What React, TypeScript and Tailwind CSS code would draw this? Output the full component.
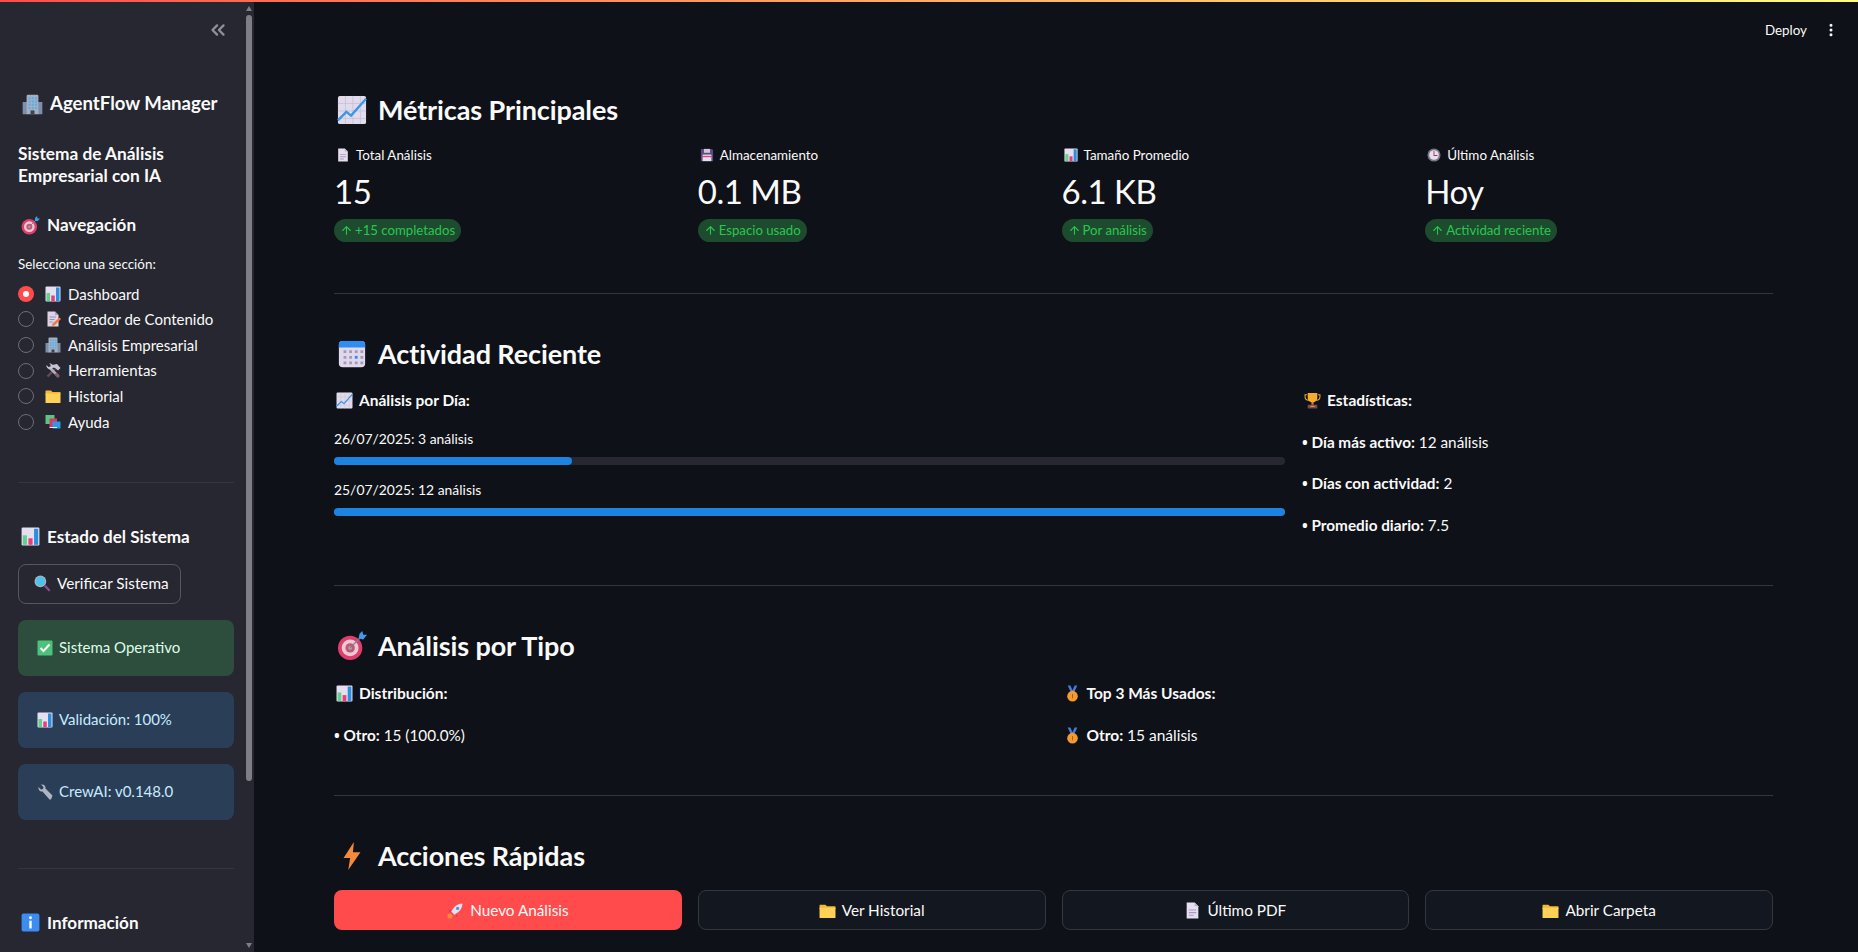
import React from "react";
import { ChevronsLeft, ArrowUp, EllipsisVertical } from "lucide-react";

type IconProps = { className?: string };

const Building = ({ className }: IconProps) => (
  <svg viewBox="0 0 32 32" className={className}>
    <path d="M1 12h7v19H1zM24 12h7v19h-7z" fill="#7d8ea6" />
    <path d="M7 3q0-2 2-2h14q2 0 2 2v28H7z" fill="#a3afc2" />
    <path d="M10 5h3v3h-3zM15 5h3v3h-3zM20 5h3v3h-3zM10 10h3v3h-3zM15 10h3v3h-3zM20 10h3v3h-3zM10 15h3v3h-3zM15 15h3v3h-3zM20 15h3v3h-3zM10 20h3v3h-3zM15 20h3v3h-3zM20 20h3v3h-3z" fill="#4fb0ee" />
    <path d="M13 25h6v6h-6z" fill="#3f4450" />
  </svg>
);

const BarChart = ({ className }: IconProps) => (
  <svg viewBox="0 0 32 32" className={className}>
    <rect x="1" y="1" width="30" height="30" rx="2" fill="#e6dff0" />
    <path d="M3 14h7v16H3z" fill="#5fd38d" />
    <path d="M12.5 19h7v11h-7z" fill="#ea3c78" />
    <path d="M22 3h7v27h-7z" fill="#2a8fe0" />
  </svg>
);

const Memo = ({ className }: IconProps) => (
  <svg viewBox="0 0 32 32" className={className}>
    <path d="M5 1h15l7 7v23H5z" fill="#dcd3e8" />
    <path d="M20 1l7 7h-7z" fill="#a99bbd" />
    <path d="M9 11h13v2H9zM9 16h10v2H9zM9 21h6v2H9z" fill="#9d8fb0" />
    <path d="M29 13l3 3-13 13-5 1 1-5z" fill="#f5793b" />
  </svg>
);

const Tools = ({ className }: IconProps) => (
  <svg viewBox="0 0 32 32" className={className}>
    <path d="M5 27L20 12" stroke="#6a4a5a" strokeWidth="4.5" />
    <path d="M14 4l10-2 7 8-5 5-6-5-5-1z" fill="#c9c2d3" />
    <path d="M9 9l18 18" stroke="#b5aec2" strokeWidth="5" />
    <path d="M21 21l7 7" stroke="#8a5a6a" strokeWidth="5" />
    <path d="M13 12C8 14 2 10 3 4l4 4 4-1 0-4-3-2c6-1 10 4 8 9z" fill="#c9c2d3" />
  </svg>
);

const Folder = ({ className }: IconProps) => (
  <svg viewBox="0 0 32 32" className={className}>
    <path d="M1 6q0-1 1-1h10l3 3h15q1 0 1 1v4H1z" fill="#f5b73a" />
    <path d="M1 11h30v18q0 1-1 1H2q-1 0-1-1z" fill="#ffd257" />
  </svg>
);

const Books = ({ className }: IconProps) => (
  <svg viewBox="0 0 32 32" className={className}>
    <path d="M1 2h18v18H1z" fill="#5fc47d" />
    <path d="M9 9h15v18H9z" fill="#d9386e" />
    <path d="M15 15h16v14H15z" fill="#2a9be0" />
    <path d="M9 26h15v2H9z" fill="#f0e9f5" />
  </svg>
);

const Magnifier = ({ className }: IconProps) => (
  <svg viewBox="0 0 32 32" className={className}>
    <path d="M19 22l3-3 9 9-3 3z" fill="#8a4f92" />
    <circle cx="12" cy="12" r="11" fill="#b7b0c4" />
    <circle cx="12" cy="12" r="9" fill="#4cc4ea" />
  </svg>
);

const CheckBox = ({ className }: IconProps) => (
  <svg viewBox="0 0 32 32" className={className}>
    <rect x="1" y="1" width="30" height="30" rx="2" fill="#4cc27a" />
    <path d="M7 16l6 6 12-13" fill="none" stroke="#fff" strokeWidth="4" />
  </svg>
);

const Wrench = ({ className }: IconProps) => (
  <svg viewBox="0 0 32 32" className={className}>
    <path d="M28 31l-3 0L11 15c-5 1-9-3-8-9l5 5 4-1 1-4-5-5c6-1 10 3 9 8l14 14z" fill="#aeb4c2" />
  </svg>
);

const Info = ({ className }: IconProps) => (
  <svg viewBox="0 0 32 32" className={className}>
    <rect x="1" y="1" width="30" height="30" rx="3" fill="#3d8df0" />
    <path d="M14 13h4v13h-4z" fill="#fff" />
    <circle cx="16" cy="8" r="2.5" fill="#fff" />
  </svg>
);

const ChartUp = ({ className }: IconProps) => (
  <svg viewBox="0 0 32 32" className={className}>
    <rect x="1" y="1" width="30" height="30" rx="2" fill="#e2dbec" />
    <path d="M1 9h30M1 17h30M1 25h30M9 1v30M17 1v30M25 1v30" stroke="#cbc2d8" strokeWidth="1" />
    <path d="M1 27l9-9 5 4L31 4" fill="none" stroke="#3a97e4" strokeWidth="2.5" />
  </svg>
);

const Page = ({ className }: IconProps) => (
  <svg viewBox="0 0 32 32" className={className}>
    <path d="M5 1h15l7 7v23H5z" fill="#e6dff0" />
    <path d="M20 1l7 7h-7z" fill="#bcb0cc" />
    <path d="M9 14h14v2H9zM9 19h14v2H9zM9 24h9v2H9z" fill="#a99bbd" />
  </svg>
);

const Floppy = ({ className }: IconProps) => (
  <svg viewBox="0 0 32 32" className={className}>
    <path d="M2 2h25l3 3v25H2z" fill="#5a4a80" />
    <path d="M9 2h14v9H9z" fill="#cfc6dc" />
    <path d="M6 15h20v15H6z" fill="#e6dff0" />
    <path d="M6 18h20v3H6z" fill="#e2406f" />
  </svg>
);

const Clock = ({ className }: IconProps) => (
  <svg viewBox="0 0 32 32" className={className}>
    <circle cx="16" cy="16" r="15" fill="#7a7583" />
    <circle cx="16" cy="16" r="11" fill="#e6e0ee" />
    <path d="M15 7h2v9h7v2h-9z" fill="#b02c5a" />
  </svg>
);

const Calendar = ({ className }: IconProps) => (
  <svg viewBox="0 0 32 32" className={className}>
    <rect x="2" y="2" width="28" height="28" rx="4" fill="#e0d8ec" />
    <path d="M2 9V6q0-4 4-4h20q4 0 4 4v3z" fill="#2f8cf2" />
    <path d="M7 12h3v3H7zM13 12h3v3h-3zM19 12h3v3h-3zM7 18h3v3H7zM13 18h3v3h-3zM25 18h3v3h-3zM7 24h3v3H7zM13 24h3v3h-3zM19 24h3v3h-3zM25 12h3v3h-3zM25 24h3v3h-3z" fill="#a49ab6" />
    <path d="M19 18h3v3h-3z" fill="#2f8cf2" />
  </svg>
);

const Target = ({ className }: IconProps) => (
  <svg viewBox="0 0 32 32" className={className}>
    <circle cx="14" cy="18" r="13" fill="#df3e6c" />
    <circle cx="14" cy="18" r="9" fill="#eac8d6" />
    <circle cx="14" cy="18" r="5" fill="#c5566f" />
    <circle cx="14" cy="18" r="2" fill="#a7a1b2" />
    <path d="M14 18L26 6" stroke="#7a7f96" strokeWidth="1.5" />
    <path d="M24 3l3-3 1 4 4 0-4 5-5-1z" fill="#3d9be9" />
  </svg>
);

const Trophy = ({ className }: IconProps) => (
  <svg viewBox="0 0 32 32" className={className}>
    <path d="M6 5H2v4q0 6 7 7M26 5h4v4q0 6-7 7" fill="none" stroke="#e4a52f" strokeWidth="2" />
    <path d="M7 2h18v9q0 8-9 9-9-1-9-9z" fill="#f6ab2d" />
    <path d="M14 19h4v5h-4z" fill="#d08b22" />
    <path d="M7 24h18v7H7z" fill="#7b4a55" />
    <path d="M12 26h8v2h-8z" fill="#e4a52f" />
  </svg>
);

const Medal = ({ className }: IconProps) => (
  <svg viewBox="0 0 32 32" className={className}>
    <path d="M7 1h5l4 9 4-9h5l-6 13h-6z" fill="#3f7fe0" />
    <circle cx="16" cy="21" r="10" fill="#f59a2f" />
    <path d="M15 17h2v8h-2z" fill="#a8611a" />
  </svg>
);

const Bolt = ({ className }: IconProps) => (
  <svg viewBox="0 0 32 32" className={className}>
    <path d="M18 1L7 18h7l-2 13 13-19h-8z" fill="#f58a3c" />
  </svg>
);

const Rocket = ({ className }: IconProps) => (
  <svg viewBox="0 0 32 32" className={className}>
    <path d="M6 21l-5 2 0 8 8 0 2-5z" fill="#f58a3c" />
    <path d="M9 14l-6 2 3 5zM18 23l-2 6 5-3z" fill="#d9386e" />
    <path d="M29 3c-9 0-16 6-21 15l6 6c9-5 15-12 15-21z" fill="#e6dff0" />
    <circle cx="20" cy="12" r="3" fill="#4a90e8" />
  </svg>
);

const SectionTitle = ({ Icon, mt, children }: { Icon: React.FC<IconProps>; mt: string; children: React.ReactNode }) => (
  <h3 className={`flex items-center gap-[11px] h-[40px] text-[27px] font-bold leading-[40px] pl-[3px] tracking-[-0.1px] ${mt}`}>
    <Icon className="w-[30px] h-[30px] shrink-0" />
    <span>{children}</span>
  </h3>
);

const Metric = ({ Icon, label, value, delta }: { Icon: React.FC<IconProps>; label: string; value: string; delta: string }) => (
  <div>
    <div className="flex items-center gap-[6px] h-[20px] pl-[2px] mt-[15px] text-[13.4px] leading-[20px]">
      <Icon className="w-[14px] h-[14px] shrink-0" />
      <span>{label}</span>
    </div>
    <div className="h-[44px] mt-[4px] text-[33px] leading-[44px] tracking-[-0.5px]">{value}</div>
    <div className="flex mt-[6px]">
      <div className="flex items-center gap-[2px] h-[23px] px-[6px] rounded-full bg-[#1d4b2e] text-[#2bc651] text-[13.2px]">
        <ArrowUp className="w-[13px] h-[13px]" strokeWidth={2} />
        <span>{delta}</span>
      </div>
    </div>
  </div>
);

const Bar = ({ label, pct }: { label: string; pct: number }) => (
  <div>
    <div className="h-[20px] text-[13.9px] leading-[20px]">{label}</div>
    <div className="h-[8px] mt-[8px] rounded-full bg-[#262730]">
      <div className="h-full rounded-full bg-[#1c83e1]" style={{ width: `${pct}%` }} />
    </div>
  </div>
);

const BoldLine = ({ Icon, mt, children }: { Icon: React.FC<IconProps>; mt?: string; children: React.ReactNode }) => (
  <div className={`flex items-center gap-[6px] h-[24px] pl-[2px] text-[15.5px] leading-[24px] font-bold ${mt ?? ""}`}>
    <Icon className="w-[17px] h-[17px] shrink-0" />
    <span>{children}</span>
  </div>
);

const Stat = ({ label, value, mt }: { label: string; value: string; mt?: string }) => (
  <div className={`h-[24px] text-[15.3px] leading-[24px] ${mt ?? ""}`}>
    <strong className="font-bold"><span className="font-['Noto_Sans']">•</span> {label}:</strong> {value}
  </div>
);

const Hr = ({ mt }: { mt: string }) => <div className={`h-px bg-[#34363d] ${mt}`} />;

const QuickButton = ({ Icon, primary, children }: { Icon: React.FC<IconProps>; primary?: boolean; children: React.ReactNode }) => (
  <button
    className={
      primary
        ? "flex items-center justify-center gap-[6px] h-[40px] rounded-lg bg-[#ff4b4b] text-[15.3px]"
        : "flex items-center justify-center gap-[6px] h-[40px] rounded-lg border border-[#34373f] bg-[#13171f] text-[15.3px]"
    }
  >
    <Icon className="w-[17px] h-[17px]" />
    <span>{children}</span>
  </button>
);

const navItems = [
  { Icon: BarChart, label: "Dashboard" },
  { Icon: Memo, label: "Creador de Contenido" },
  { Icon: Building, label: "Análisis Empresarial" },
  { Icon: Tools, label: "Herramientas" },
  { Icon: Folder, label: "Historial" },
  { Icon: Books, label: "Ayuda" },
];

const SideTitle = ({ Icon, mt, children }: { Icon: React.FC<IconProps>; mt: string; children: React.ReactNode }) => (
  <div className={`flex items-center gap-[7px] h-[28px] pl-[3px] text-[17.1px] font-bold ${mt}`}>
    <Icon className="w-[19px] h-[19px] shrink-0" />
    <span>{children}</span>
  </div>
);

const StatusBox = ({ Icon, tone, mt, children }: { Icon: React.FC<IconProps>; tone: string; mt: string; children: React.ReactNode }) => (
  <div className={`flex items-center gap-[6px] h-[56px] pl-[19px] rounded-lg text-[15px] ${tone} ${mt}`}>
    <Icon className="w-[16px] h-[16px] shrink-0" />
    <span>{children}</span>
  </div>
);

const Sidebar = () => (
  <aside className="relative w-[254px] shrink-0 bg-[#262730] pl-[18px] pr-[20px] overflow-hidden">
    <div className="flex justify-end pr-[5px] pt-[17px]">
      <ChevronsLeft className="w-[22px] h-[22px] text-[#8f9099]" strokeWidth={2.5} />
    </div>
    <div className="flex items-center gap-[7px] h-[30px] mt-[48px] pl-[4px] text-[18.6px] font-bold whitespace-nowrap">
      <Building className="w-[21px] h-[21px] shrink-0" />
      <span>AgentFlow Manager</span>
    </div>
    <p className="mt-[24px] text-[17.3px] leading-[22px] font-bold">
      Sistema de Análisis
      <br />
      Empresarial con IA
    </p>
    <SideTitle Icon={Target} mt="mt-[24px]">Navegación</SideTitle>
    <div className="h-[20px] mt-[15px] text-[13.4px] leading-[20px]">Selecciona una sección:</div>
    <div className="mt-[7px]">
      {navItems.map((item, i) => (
        <div key={item.label} className="flex items-center h-[25.6px] text-[15px]">
          {i === 0 ? (
            <span className="flex items-center justify-center w-[16px] h-[16px] rounded-full bg-[#ff4b4b]">
              <span className="w-[6px] h-[6px] rounded-full bg-white" />
            </span>
          ) : (
            <span className="w-[16px] h-[16px] rounded-full border border-[#6c6d75]" />
          )}
          <item.Icon className="w-[16px] h-[16px] ml-[11px] mr-[7px]" />
          <span>{item.label}</span>
        </div>
      ))}
    </div>
    <Hr mt="mt-[47px]" />
    <SideTitle Icon={BarChart} mt="mt-[40px]">Estado del Sistema</SideTitle>
    <button className="flex items-center gap-[6px] h-[40px] w-[163px] mt-[13px] pl-[15px] rounded-lg border border-[#55565f] text-[15.3px]">
      <Magnifier className="w-[17px] h-[17px]" />
      <span>Verificar Sistema</span>
    </button>
    <StatusBox Icon={CheckBox} tone="bg-[#2d4d3d] text-[#dffde9]" mt="mt-[16px]">Sistema Operativo</StatusBox>
    <StatusBox Icon={BarChart} tone="bg-[#2a3e58] text-[#c7ebff]" mt="mt-[16px]">Validación: 100%</StatusBox>
    <StatusBox Icon={Wrench} tone="bg-[#2a3e58] text-[#c7ebff]" mt="mt-[16px]">CrewAI: v0.148.0</StatusBox>
    <Hr mt="mt-[48px]" />
    <SideTitle Icon={Info} mt="mt-[40px]">Información</SideTitle>

    {/* scrollbar */}
    <div className="absolute top-0 bottom-0 left-[246px] w-[6px]">
      <div className="absolute top-[4px] left-0 w-0 h-0 border-x-[3px] border-x-transparent border-b-[5px] border-b-[#7e7e86]" />
      <div className="absolute top-[13px] left-0 w-[6px] h-[766px] rounded-full bg-[#7e7e86]" />
      <div className="absolute bottom-[4px] left-0 w-0 h-0 border-x-[3px] border-x-transparent border-t-[5px] border-t-[#7e7e86]" />
    </div>
  </aside>
);

const App = () => {
  return (
    <div className="flex flex-col h-[952px] w-[1858px] overflow-hidden bg-[#0e1117] text-[#fafafa] font-['Lato',sans-serif]">
      <div className="h-[2px] shrink-0 bg-gradient-to-r from-[#ff4b4b] to-[#fffd80]" />
      <div className="flex flex-1 min-h-0">
        <Sidebar />
        <main className="relative flex-1 pl-[80px] pr-[85px] pt-[88px] overflow-hidden">
          <div className="absolute top-[18px] right-[19px] flex items-center gap-[16px] text-[13.4px]">
            <span>Deploy</span>
            <EllipsisVertical className="w-[16px] h-[16px]" strokeWidth={2.5} />
          </div>

          <SectionTitle Icon={ChartUp} mt="mt-0">Métricas Principales</SectionTitle>
          <div className="grid grid-cols-4 gap-[16px]">
            <Metric Icon={Page} label="Total Análisis" value="15" delta="+15 completados" />
            <Metric Icon={Floppy} label="Almacenamiento" value="0.1 MB" delta="Espacio usado" />
            <Metric Icon={BarChart} label="Tamaño Promedio" value="6.1 KB" delta="Por análisis" />
            <Metric Icon={Clock} label="Último Análisis" value="Hoy" delta="Actividad reciente" />
          </div>
          <Hr mt="mt-[51px]" />

          <SectionTitle Icon={Calendar} mt="mt-[40px]">Actividad Reciente</SectionTitle>
          <div className="grid grid-cols-[951px_1fr] gap-[17px] mt-[14px]">
            <div>
              <BoldLine Icon={ChartUp}>Análisis por Día:</BoldLine>
              <div className="mt-[17px]">
                <Bar label="26/07/2025: 3 análisis" pct={25} />
              </div>
              <div className="mt-[15px]">
                <Bar label="25/07/2025: 12 análisis" pct={100} />
              </div>
            </div>
            <div>
              <BoldLine Icon={Trophy}>Estadísticas:</BoldLine>
              <Stat label="Día más activo" value="12 análisis" mt="mt-[18px]" />
              <Stat label="Días con actividad" value="2" mt="mt-[17px]" />
              <Stat label="Promedio diario" value="7.5" mt="mt-[18px]" />
            </div>
          </div>
          <Hr mt="mt-[48px]" />

          <SectionTitle Icon={Target} mt="mt-[40px]">Análisis por Tipo</SectionTitle>
          <div className="grid grid-cols-2 gap-[16px] mt-[15px]">
            <div>
              <BoldLine Icon={BarChart}>Distribución:</BoldLine>
              <Stat label="Otro" value="15 (100.0%)" mt="mt-[18px]" />
            </div>
            <div>
              <BoldLine Icon={Medal}>Top 3 Más Usados:</BoldLine>
              <BoldLine Icon={Medal} mt="mt-[18px]">
                Otro: <span className="font-normal">15 análisis</span>
              </BoldLine>
            </div>
          </div>
          <Hr mt="mt-[48px]" />

          <SectionTitle Icon={Bolt} mt="mt-[40px]">Acciones Rápidas</SectionTitle>
          <div className="grid grid-cols-4 gap-[16px] mt-[14px]">
            <QuickButton Icon={Rocket} primary>Nuevo Análisis</QuickButton>
            <QuickButton Icon={Folder}>Ver Historial</QuickButton>
            <QuickButton Icon={Page}>Último PDF</QuickButton>
            <QuickButton Icon={Folder}>Abrir Carpeta</QuickButton>
          </div>
        </main>
      </div>
    </div>
  );
};

export default App;
